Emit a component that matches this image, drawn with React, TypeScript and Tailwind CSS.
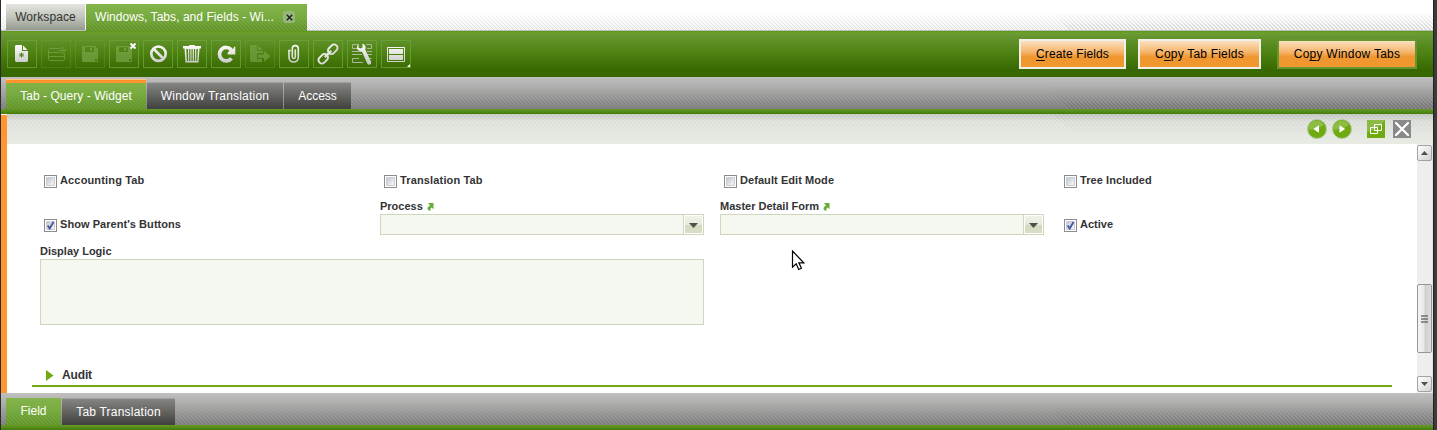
import type { ReactNode } from "react";

const HATCH =
  "bg-[repeating-linear-gradient(45deg,rgba(0,0,0,0.13)_0px,rgba(0,0,0,0.13)_1px,transparent_1px,transparent_2.83px)]";

function Hatch({ className = "" }: { className?: string }) {
  return <div className={`pointer-events-none absolute inset-x-0 bottom-0 [mask-image:linear-gradient(to_bottom,transparent,black)] ${HATCH} ${className}`} />;
}

function ToolButton({ children, disabled = false, corner = false }: { children: ReactNode; disabled?: boolean; corner?: boolean }) {
  return (
    <button className={`h-7 w-[30px] shrink-0 border ${disabled ? "border-[#6ea53a]/35" : "border-[#6ea53a]/75"}`}>
      <svg width="30" height="28" viewBox="0 0 30 28" className="-m-px block overflow-visible" fill="none">
        {children}
        {corner && <path d="M29 24v3h-3z" fill="#fff" />}
      </svg>
    </button>
  );
}

const G = "url(#silver)";
const D = "#7ba94f";

function Toolbar() {
  return (
    <div className="flex gap-1">
      <svg width="0" height="0" className="absolute">
        <defs>
          <linearGradient id="silver" gradientUnits="userSpaceOnUse" x1="0" y1="4" x2="0" y2="23">
            <stop offset="0" stopColor="#fff" />
            <stop offset="1" stopColor="#c9cbc7" />
          </linearGradient>
        </defs>
      </svg>
      <ToolButton>
        <path d="M9 5h6v6h6v10l-1 1H9l-1-1V6z" fill={G} />
        <path d="M16 5.500L20.500 10H16z" fill={G} />
        <path d="M14.500 12.500v5M12 15h5M12.700 13.200l3.600 3.600M16.300 13.200l-3.600 3.600" stroke="#477a17" strokeWidth=".9" />
      </ToolButton>
      <ToolButton disabled>
        <g stroke={D} opacity=".65">
          <path d="M18 8.500H8.500l-1 1v10l1 1h14l1-1v-6M7.500 12.500h11M7.500 16.500h16" />
          <circle cx="21.500" cy="10.500" r="2.700" strokeDasharray="1.500 1" strokeWidth="1.400" />
          <path d="M20 10.500h3M21.500 9v3" />
        </g>
      </ToolButton>
      <ToolButton disabled>
        <path fillRule="evenodd" d="M8 6h12l3 3v12l-1 1H8l-1-1V7zM10 7v5h9V7zM20 19h2v2h-2z" fill={D} opacity=".65" />
        <path d="M15 7.500h2v3.500h-2z" fill={D} opacity=".7" />
      </ToolButton>
      <ToolButton>
        <path fillRule="evenodd" d="M8 6h12l3 3v12l-1 1H8l-1-1V7zM10 7v5h9V7zM20 19h2v2h-2z" fill={D} opacity=".65" />
        <path d="M15 7.500h2v3.500h-2z" fill={D} opacity=".7" />
        <path d="M21.500 3.500l5 5M26.500 3.500l-5 5" stroke="#fff" strokeWidth="2" />
      </ToolButton>
      <ToolButton>
        <circle cx="15.500" cy="13.700" r="7.200" stroke={G} strokeWidth="2.700" />
        <path d="M10.500 8.800l10 10" stroke={G} strokeWidth="2.700" />
      </ToolButton>
      <ToolButton>
        <path d="M12.500 6.500v-1h5v1" stroke={G} />
        <path fillRule="evenodd" d="M6 6h18v2.500h-1.500l-1 14h-13l-1-14H6zM9.300 9l.6 12h1.200V9zM12.200 9v12h1.200V9zM14.500 9v12h1.200V9zM16.900 9v12h1.200V9zM19.300 9v12h1l.6-12z" fill={G} />
      </ToolButton>
      <ToolButton>
        <path d="M20.500 18.300A6.700 6.700 0 1 1 20.300 9.800" stroke={G} strokeWidth="3.700" />
        <path d="M24.300 6.800v7.700h-7.600v-2l3-3.200 2.500-.3 1-2.200z" fill={G} />
      </ToolButton>
      <ToolButton disabled>
        <path d="M6 5h6v6h6v2h-6v6h5v3H6l-1-1V6zM13 5.500l5 4.500h-5z" fill={D} opacity=".6" />
        <path d="M13 14.500h6V10.700l6.500 5.500-6.500 5.500V18h-6z" fill={D} opacity=".6" />
      </ToolButton>
      <ToolButton>
        <path d="M11.700 10.500H10v7.500a4.700 4.700 0 0 0 9.300 0V8.600c0-4-6-4-6 0v8.200c0 2.200 3 2.200 3 0V9.500" stroke={G} strokeWidth="1.600" />
      </ToolButton>
      <ToolButton>
        <g transform="rotate(-45 15 14)" stroke={G} strokeWidth="1.900">
          <rect x="3" y="10.600" width="10.500" height="6.800" rx="3.200" />
          <rect x="16.500" y="10.600" width="10.500" height="6.800" rx="3.200" />
          <path d="M10.500 14h9" strokeWidth="2.300" />
        </g>
      </ToolButton>
      <ToolButton>
        <g stroke="#a9bb98">
          <path d="M11 4.500H5.500v4H11M19 4.500h5.500v4H20M5 11.500h10M20 11.500h5M5 14.500h10M20 14.500h5M12 18.500H5.500v4H16M21 18.500h3.500" />
        </g>
        <path d="M11.500 3.500v4l2 1 2-1v-4q4.500 2 2.700 6l6 12.500q.3 2.500-2 2.800-1.500 0-2-1.300L15 11.500q-5.500-.5-5-5z" fill={G} />
      </ToolButton>
      <ToolButton corner>
        <path d="M6.500 7.500h17v14h-17z" stroke={G} />
        <path d="M8 9h14v5H8zM8 15h14v5H8z" fill={G} />
      </ToolButton>
    </div>
  );
}

function ActionButton({ before = "", hot, after, className }: { before?: string; hot: string; after: string; className: string }) {
  return (
    <button className={`h-[30px] whitespace-nowrap border-2 bg-[linear-gradient(to_bottom,#fbe0bf_0px,#f5b56b_11px,#f0962f_16px,#f0982f_100%)] text-[12px] leading-[26px] text-black ${className}`}>
      {before}
      <span className="underline underline-offset-2">{hot}</span>
      {after}
    </button>
  );
}

function GreyTab({ children, className }: { children: string; className: string }) {
  return (
    <div className={`relative h-[27px] border-t border-[#a2a2a0] bg-[linear-gradient(to_bottom,#858583,#62625f_50%,#40403e)] text-center leading-[27px] text-white ${className}`}>
      {children}
    </div>
  );
}

function CheckItem({ label, checked = false, className = "" }: { label: string; checked?: boolean; className?: string }) {
  return (
    <label className={`flex h-[13px] items-start gap-[3px] pl-1 ${className}`}>
      <span className="h-[13px] w-[13px] border border-[#8b8c8d] bg-white p-px">
        <svg width="9" height="9" viewBox="0 0 9 9" className="block overflow-visible">
          <defs>
            <linearGradient id="check" x1="0" y1="0" x2="1" y2="1">
              <stop offset="0" stopColor="#bfc5ce" />
              <stop offset="1" stopColor="#fbfbfb" />
            </linearGradient>
          </defs>
          <path d="M.5.5h8v8h-8z" fill="url(#check)" stroke="#c9ccd2" />
          {checked && <path d="M1.700 4.500l2 3L7.500 1" fill="none" stroke="#43579a" strokeWidth="1.800" />}
        </svg>
      </span>
      <span className="-mt-px leading-[13px]">{label}</span>
    </label>
  );
}

function Combo({ label }: { label: string }) {
  return (
    <div className="w-[324px]">
      <div className="flex h-[14px] items-start gap-1 leading-[13px]">
        {label}
        <svg width="7" height="8" viewBox="0 0 7 8" className="mt-[3px]">
          <path d="M1 0h5.500v6.200L4.700 4.600Q2.800 5.600 3.400 8 .2 7.200.5 4.700L3 2.300z" fill="#67ab39" />
        </svg>
      </div>
      <div className="flex h-[21px] border border-[#cdd7bb] bg-[#f5f8f1]">
        <div className="flex-1" />
        <div className="flex w-[20px] border-l border-[#cdd7bb] bg-white p-px">
          <div className="flex flex-1 items-center justify-center bg-[linear-gradient(to_bottom,#eff2e7_0,#e6eadb_50%,#d1d9bf_51%,#d8dfc9_100%)]">
            <svg width="9" height="5" viewBox="0 0 9 5" className="mt-px">
              <path d="M0 0h9L4.500 5z" fill="#4d4f48" />
            </svg>
          </div>
        </div>
      </div>
    </div>
  );
}

function RoundButton({ next = false }: { next?: boolean }) {
  return (
    <svg width="20" height="20" viewBox="0 0 20 20">
      <circle cx="10" cy="10" r="9.500" fill="#70aa11" stroke="#b3caa0" />
      <path d="M1.500 11A8.500 8.500 0 0 1 17 5.500Q12 10 1.500 11z" fill="#8fbd43" />
      <path d={next ? "M7.500 6.200L13.200 10l-5.700 3.800z" : "M12 6.200L6.300 10l5.700 3.800z"} fill="#fff" />
    </svg>
  );
}

function ScrollButton({ down = false }: { down?: boolean }) {
  return (
    <div className="flex h-4 w-[15px] items-center justify-center rounded-[2px] border border-[#a2a2a2] bg-[linear-gradient(135deg,#fff,#d2d2d2)]">
      <svg width="7" height="4" viewBox="0 0 7 4">
        <path d={down ? "M0 0h7L3.500 4z" : "M3.500 0L7 4H0z"} fill="#505050" />
      </svg>
    </div>
  );
}

const BAR = "relative flex h-8 shrink-0 items-end bg-[linear-gradient(to_bottom,#c0c0c0,#a9a9a8_40%,#858585)] pl-[5px]";
const ACTIVE = "relative bg-[linear-gradient(to_bottom,#84b44b,#78ab40_50%,#699c31)] text-center text-white";

export default function App() {
  return (
    <div className="relative flex h-[430px] w-[1437px] overflow-hidden border-l border-[#2c2a2c] bg-white font-['Liberation_Sans',Arial,sans-serif] text-[12px] text-[#333]">
      <div className="flex w-[1432px] shrink-0 flex-col">
        <header className="relative flex h-[31px] shrink-0 items-start border-b border-[#bdbec2] bg-[linear-gradient(to_bottom,#fff_40%,#f4f4f4)] pl-[5px] pt-1">
          <Hatch className="h-[18px] opacity-90" />
          <div className="relative h-[26px] w-[79px] bg-[linear-gradient(to_bottom,#e2e5df,#c2c6bd_50%,#959a90)] text-center leading-[26px] tracking-[0.1px]">Workspace</div>
          <div className={`ml-px h-[27px] w-[221px] ${ACTIVE}`}>
            <Hatch className="h-[18px]" />
            <div className="relative flex h-full items-center pl-[9px] pb-px">
              <span className="w-[182px] text-left tracking-[0.05px]">Windows, Tabs, and Fields - Wi...</span>
              <span className="ml-[6px] flex h-3 w-3 items-center justify-center rounded-[3px] bg-[#95b77a]">
                <svg width="7" height="7" viewBox="0 0 7 7"><path d="M.8.8l5.400 5.400M6.200.8L.8 6.200" stroke="#222" strokeWidth="1.500" /></svg>
              </span>
            </div>
          </div>
        </header>

        <div className="flex h-[46px] shrink-0 items-start justify-between bg-[linear-gradient(to_bottom,#5f9619_0,#6c9f2f_2px,#659630_5px,#4c8010_50%,#386802_85%,#386900_100%)] pl-[6px] pr-4">
          <div className="pt-[9px]"><Toolbar /></div>
          <div className="flex pt-2">
            <ActionButton hot="C" after="reate Fields" className="w-[107px] border-[#efefe8] tracking-[0.12px]" />
            <ActionButton before="C" hot="o" after="py Tab Fields" className="ml-3 w-[123px] border-[#efefe8] tracking-[0.2px]" />
            <ActionButton before="Co" hot="p" after="y Window Tabs" className="ml-4 w-[140px] border-[#66962f] tracking-[0.25px]" />
          </div>
        </div>

        <nav className={BAR}>
          <Hatch className="h-[22px]" />
          <div className={`h-[30px] w-[140px] border-t border-[#ffc982] leading-[32px] ${ACTIVE}`}>
            <div className="h-[3px] bg-[#ff952c]" />
            <Hatch className="h-[18px]" />
            <span className="relative -mt-[3px] block tracking-[0.05px]">Tab - Query - Widget</span>
          </div>
          <GreyTab className="ml-px w-[136px] tracking-[0.2px]">Window Translation</GreyTab>
          <GreyTab className="ml-px w-[67px]">Access</GreyTab>
        </nav>
        <div className="h-[5px] shrink-0 bg-[linear-gradient(to_bottom,#669b28,#457b0b)]" />

        <div className="flex h-[279px] shrink-0">
          <div className="mt-px w-[6px] shrink-0 bg-[#ff952c]" />
          <div className="flex flex-1 flex-col">
            <div className="relative flex h-[30px] shrink-0 items-center justify-end bg-[linear-gradient(to_bottom,#ccceca,#e2e4df_25%,#e8ebe4)] pr-[22px]">
              <div className={`absolute inset-x-0 top-0 h-[22px] opacity-50 [mask-image:linear-gradient(to_bottom,black,transparent)] ${HATCH}`} />
              <div className="relative flex items-center">
                <RoundButton />
                <span className="w-[5px]" />
                <RoundButton next />
                <svg width="18" height="18" viewBox="0 0 18 18" className="ml-[15px]">
                  <path d="M0 0h18v18H0z" fill="#70aa11" />
                  <path d="M0 0h18Q13 9 0 12z" fill="#8bbb42" />
                  <path d="M7.500 4.500h7v6h-7zM3.500 7.500h7v6h-7z" fill="none" stroke="#fff" />
                </svg>
                <svg width="18" height="18" viewBox="0 0 18 18" className="ml-2">
                  <path d="M0 0h18v18H0z" fill="#898989" />
                  <path d="M3 3l12 12M15 3L3 15" stroke="#fff" strokeWidth="2.300" strokeLinecap="round" />
                </svg>
              </div>
            </div>
            <div className="flex h-[249px]">
              <main className="w-[1410px] pl-[33px] text-[11px] font-bold">
                <div className="grid h-[56px] grid-cols-[repeat(4,340px)] pt-[31px] tracking-[0.1px]">
                  <CheckItem label="Accounting Tab" className="tracking-[0.15px]" />
                  <CheckItem label="Translation Tab" className="tracking-[0.15px]" />
                  <CheckItem label="Default Edit Mode" className="tracking-[0.07px]" />
                  <CheckItem label="Tree Included" className="tracking-[0.07px]" />
                </div>
                <div className="grid h-[45px] grid-cols-[repeat(4,340px)]">
                  <CheckItem label="Show Parent's Buttons" checked className="mt-[19px] tracking-[0.05px]" />
                  <Combo label="Process" />
                  <Combo label="Master Detail Form" />
                  <CheckItem label="Active" checked className="mt-[19px]" />
                </div>
                <div className="h-[14px] leading-[13px]">Display Logic</div>
                <div className="h-[66px] w-[664px] border border-[#cdd7bb] bg-[#f5f8f1]" />
                <div className="-ml-2 mt-[38px] flex h-6 w-[1360px] items-center border-b-2 border-[#72a913] pl-[14px] pt-[2px] text-[12px]">
                  <svg width="8" height="11" viewBox="0 0 8 11"><path d="M0 0l7.500 5.500L0 11z" fill="#72a913" /></svg>
                  <span className="ml-2 tracking-[-0.15px]">Audit</span>
                </div>
              </main>
              <div className="flex w-4 flex-col border-r border-[#e2e2e2] bg-[#eee] pt-px">
                <ScrollButton />
                <div className="mt-[123px] flex h-[69px] w-[15px] items-center justify-center rounded-[2px] border border-[#959595] bg-[linear-gradient(to_right,#f4f4f4,#e8e8e8_45%,#cfcfcf_55%,#dedede)]">
                  <svg width="7" height="8" viewBox="0 0 7 8"><path d="M0 1h7M0 4h7M0 7h7" stroke="#707070" strokeWidth="1.500" /></svg>
                </div>
                <div className="mt-[23px]"><ScrollButton down /></div>
              </div>
            </div>
          </div>
        </div>

        <nav className={BAR}>
          <Hatch className="h-[22px]" />
          <div className={`h-[27px] w-[55px] leading-[27px] ${ACTIVE}`}>
            <Hatch className="h-[18px]" />
            <span className="relative">Field</span>
          </div>
          <GreyTab className="ml-px w-[113px] tracking-[0.22px]">Tab Translation</GreyTab>
        </nav>
        <div className="h-[5px] shrink-0 bg-[linear-gradient(to_bottom,#669b28,#457b0b)]" />
      </div>
      <div className="flex-1 border-l border-[#222] bg-[#3b3b3b]" />

      <svg width="14" height="21" viewBox="0 0 14 21" className="absolute left-[790px] top-[250px]">
        <path d="M1.500 1v16.200l3.700-3.400 2.500 5.700 2.700-1.200-2.500-5.500h4.800z" fill="#fff" stroke="#000" strokeWidth="1.200" />
      </svg>
    </div>
  );
}
